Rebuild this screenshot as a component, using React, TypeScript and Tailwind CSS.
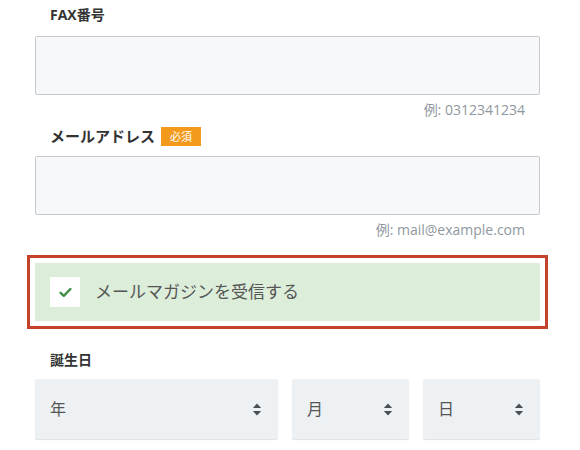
import React from 'react';

const font = { fontFamily: '"Open Sans", "Noto Sans CJK JP", sans-serif' };

function SortIcon() {
    return (
        <svg width="10" height="15" viewBox="0 0 10 15" className="text-[#4a4f54]">
            <path d="M0.8 6 L5 1.6 L9.2 6 Z" fill="currentColor" />
            <path d="M0.8 9 L5 13.4 L9.2 9 Z" fill="currentColor" />
        </svg>
    );
}

function Select({ label, className }: { label: string; className: string }) {
    return (
        <div className={`${className} h-[60px] flex items-center justify-between pl-[15px] pr-[16px] bg-[#eef1f3] rounded-[2px] shadow-[0_1px_1px_rgba(0,0,0,0.12)]`}>
            <span className="text-[16px] text-[#555]">{label}</span>
            <SortIcon />
        </div>
    );
}

function TextField({ hint }: { hint: string }) {
    return (
        <>
            <div className="h-[59px] bg-[#f7f8f9] border border-[#c6cace] rounded-[2px]" />
            <div className="mt-[6px] pr-[15px] text-right text-[14px] leading-[18px] text-[#8f979e]">{hint}</div>
        </>
    );
}

export default function App() {
    return (
        <div className="bg-white w-[580px] h-[450px] overflow-hidden" style={font}>
            <div className="ml-[35px] w-[505px]">
                <div className="pt-[5px] pl-[15px] text-[14px] leading-[20px] font-bold text-[#333]">FAX番号</div>
                <div className="mt-[11px]">
                    <TextField hint="例: 0312341234" />
                </div>

                <div className="mt-[7px] pl-[15px] flex items-center h-[20px] gap-[6px]">
                    <span className="text-[15px] font-bold text-[#333]">メールアドレス</span>
                    <span className="bg-[#f39a1c] text-white text-[11px] leading-[19px] px-[9px]">必須</span>
                </div>
                <div className="mt-[10px]">
                    <TextField hint="例: mail@example.com" />
                </div>

                <div className="mt-[16px] -mx-[8px] border-[3px] border-[#c2432a] p-[5px]">
                    <div className="h-[58px] bg-[#dcedd9] flex items-center pl-[15px]">
                        <div className="w-[30px] h-[30px] bg-white flex items-center justify-center">
                            <svg width="13" height="11" viewBox="0 0 13 11">
                                <path d="M1.6 5.8 L4.8 8.8 L11.4 2" fill="none" stroke="#3f8f45" strokeWidth="2.4" strokeLinecap="round" strokeLinejoin="round" />
                            </svg>
                        </div>
                        <span className="ml-[15px] text-[17px] text-[#555]">メールマガジンを受信する</span>
                    </div>
                </div>

                <div className="mt-[21px] pl-[15px] text-[14px] leading-[20px] font-bold text-[#333]">誕生日</div>
                <div className="mt-[9px] flex gap-[14px]">
                    <Select label="年" className="w-[243px]" />
                    <Select label="月" className="w-[117px]" />
                    <Select label="日" className="flex-1" />
                </div>
            </div>
        </div>
    );
}
